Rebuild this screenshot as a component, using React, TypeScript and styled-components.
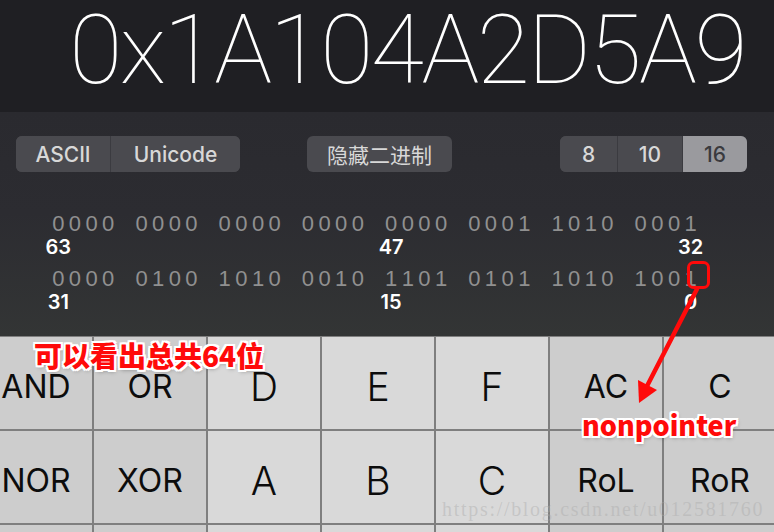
import React from "react";
import styled, { createGlobalStyle } from "styled-components";

const GlobalStyle = createGlobalStyle`
  html, body {
    margin: 0;
    padding: 0;
    background: #1f1f23;
    overflow: hidden;
  }
  * { box-sizing: border-box; }
`;

const CELL = 16.65;

const Screen = styled.div`
  position: relative;
  width: 774px;
  height: 532px;
  overflow: hidden;
  font-family: Inter, "Noto Sans", "Noto Sans CJK SC", sans-serif;
`;

const Display = styled.div`
  height: 112px;
  background: #1f1f23;
  display: flex;
  justify-content: flex-end;
  align-items: flex-start;
  padding-right: 29px;
`;

const Value = styled.div`
  font-family: Roboto, Inter, sans-serif;
  font-weight: 100;
  font-size: 97px;
  line-height: 97px;
  color: #ffffff;
  margin-top: 2px;
  letter-spacing: -2.5px;
`;

const Panel = styled.div`
  height: 224px;
  background: linear-gradient(180deg, #2a2a2f 0%, #2c2c31 45%, #333535 100%);
  padding-top: 24px;
`;

const Toolbar = styled.div`
  display: flex;
  align-items: center;
  padding-left: 16px;
  height: 36px;
`;

const Segmented = styled.div<{ $gap?: number }>`
  display: flex;
  height: 36px;
  border-radius: 6px;
  overflow: hidden;
  margin-left: ${(p) => p.$gap ?? 0}px;
  background: #4a4a4f;
`;

const Seg = styled.div<{ $w: number; $active?: boolean; $first?: boolean }>`
  width: ${(p) => p.$w}px;
  display: flex;
  align-items: center;
  justify-content: center;
  font-size: 21px;
  font-weight: 500;
  color: ${(p) => (p.$active ? "#3a3a3e" : "#d8d8d8")};
  background: ${(p) => (p.$active ? "#9a9a9e" : "#4a4a4f")};
  border-left: ${(p) => (p.$first ? "none" : "1px solid #3b3b40")};
`;

const Pill = styled.div`
  margin-left: 67px;
  width: 145px;
  height: 36px;
  border-radius: 6px;
  background: #4a4a4f;
  color: #d8d8d8;
  font-family: "Noto Sans CJK SC", sans-serif;
  font-size: 21px;
  display: flex;
  align-items: center;
  justify-content: center;
`;

const Bits = styled.div`
  padding-left: 50px;
  margin-top: 40px;
`;

const Grid39 = styled.div<{ $h: number }>`
  display: grid;
  grid-template-columns: repeat(39, ${CELL}px);
  height: ${(p) => p.$h}px;
`;

const Bit = styled.div`
  display: flex;
  justify-content: center;
  font-family: "Liberation Sans", Arial, sans-serif;
  font-size: 22px;
  line-height: 24px;
  color: #909090;
`;

const Label = styled.div`
  display: flex;
  justify-content: center;
  font-size: 20px;
  line-height: 22px;
  font-weight: 600;
  color: #ffffff;
  white-space: nowrap;
`;

const Keypad = styled.div`
  display: grid;
  grid-template-columns: repeat(7, 112px);
  grid-auto-rows: 92px;
  gap: 2px;
  padding-top: 1px;
  margin-left: -20px;
  width: 800px;
  background: #7f7f7f;
`;

const Key = styled.div<{ $op?: boolean; $big?: boolean }>`
  display: flex;
  align-items: center;
  justify-content: center;
  padding-top: 6px;
  background: ${(p) => (p.$op ? "#cdcdcd" : "#d9d9d9")};
  color: #0c0c0c;
  font-size: ${(p) => (p.$big ? 39 : 32)}px;
  font-weight: ${(p) => (p.$big ? 300 : 400)};
`;

const Note = styled.div<{ $size: number }>`
  position: absolute;
  color: #ff0a0a;
  font-family: "Noto Sans CJK SC", "Noto Sans", sans-serif;
  font-weight: 900;
  font-size: ${(p) => p.$size}px;
  line-height: 1;
  white-space: nowrap;
  text-shadow: 2px 0 0 #fff, -2px 0 0 #fff, 0 2px 0 #fff, 0 -2px 0 #fff,
    2px 2px 0 #fff, -2px -2px 0 #fff, 2px -2px 0 #fff, -2px 2px 0 #fff,
    1px 2px 4px rgba(0, 0, 0, 0.35);
`;

const Watermark = styled.div`
  position: absolute;
  left: 442px;
  top: 498px;
  font-family: "Liberation Serif", serif;
  font-size: 20px;
  letter-spacing: 1.7px;
  color: rgba(170, 170, 170, 0.42);
  white-space: nowrap;
`;

const Overlay = styled.svg`
  position: absolute;
  left: 0;
  top: 0;
  pointer-events: none;
`;

const hi = "0000 0000 0000 0000 0000 0001 1010 0001";
const lo = "0000 0100 1010 0010 1101 0101 1010 1001";

function BitRow({ bits }: { bits: string }) {
  return (
    <Grid39 $h={24}>
      {bits.split("").map((c, i) => (
        <Bit key={i}>{c === " " ? "" : c}</Bit>
      ))}
    </Grid39>
  );
}

function LabelRow({ labels }: { labels: [number, string][] }) {
  const cells: React.ReactNode[] = [];
  for (let i = 0; i < 39; i++) {
    const found = labels.find((l) => l[0] === i);
    cells.push(<Label key={i}>{found ? found[1] : ""}</Label>);
  }
  return <Grid39 $h={22}>{cells}</Grid39>;
}

const keys: { t: string; op?: boolean }[] = [
  { t: "AND", op: true }, { t: "OR", op: true }, { t: "D" }, { t: "E" }, { t: "F" }, { t: "AC", op: true }, { t: "C", op: true },
  { t: "NOR", op: true }, { t: "XOR", op: true }, { t: "A" }, { t: "B" }, { t: "C" }, { t: "RoL", op: true }, { t: "RoR", op: true },
  { t: "<<", op: true }, { t: ">>", op: true }, { t: "7" }, { t: "8" }, { t: "9" }, { t: "2's", op: true }, { t: "1's", op: true },
];

export default function App() {
  return (
    <Screen>
      <GlobalStyle />
      <Display>
        <Value>0x1A104A2D5A9</Value>
      </Display>
      <Panel>
        <Toolbar>
          <Segmented>
            <Seg $w={94} $first>ASCII</Seg>
            <Seg $w={130}>Unicode</Seg>
          </Segmented>
          <Pill>隐藏二进制</Pill>
          <Segmented $gap={108}>
            <Seg $w={57} $first>8</Seg>
            <Seg $w={65}>10</Seg>
            <Seg $w={65} $active>16</Seg>
          </Segmented>
        </Toolbar>
        <Bits>
          <BitRow bits={hi} />
          <LabelRow labels={[[0, "63"], [20, "47"], [38, "32"]]} />
          <Grid39 $h={9} />
          <BitRow bits={lo} />
          <LabelRow labels={[[0, "31"], [20, "15"], [38, "0"]]} />
        </Bits>
      </Panel>
      <Keypad>
        {keys.map((k, i) => (
          <Key key={i} $op={k.op} $big={!k.op}>
            {k.t}
          </Key>
        ))}
      </Keypad>

      <Watermark>https://blog.csdn.net/u012581760</Watermark>
      <Overlay width={774} height={532} viewBox="0 0 774 532">
        <rect x={688.5} y={262.5} width={20} height={25} rx={5} fill="none" stroke="#ff0a0a" strokeWidth={3} />
        <line x1={697} y1={289} x2={646} y2={388} stroke="#ff0a0a" strokeWidth={4.5} strokeLinecap="round" />
        <polygon points="639,403 638,380 657,390" fill="#ff0a0a" />
      </Overlay>
      <Note $size={28} style={{ left: 34, top: 341 }}>可以看出总共64位</Note>
      <Note $size={27} style={{ left: 582, top: 411 }}>nonpointer</Note>
    </Screen>
  );
}
